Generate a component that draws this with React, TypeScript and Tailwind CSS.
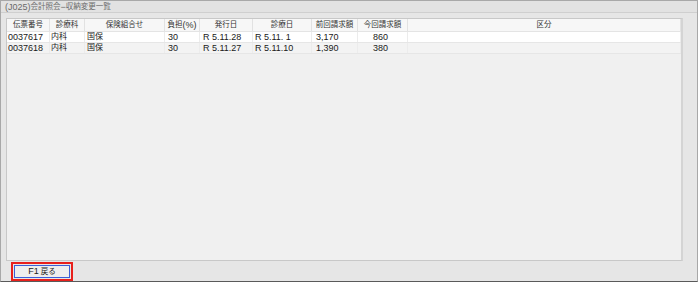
import React from "react";

const font = { fontFamily: '"Liberation Sans", "Noto Sans CJK JP", sans-serif' };

// column widths measured from the screen
const cols = [
  { key: "no", label: "伝票番号", w: "w-[43px]", pad: "pl-[1px]" },
  { key: "ka", label: "診療科", w: "w-[35px]", pad: "pl-[1px]" },
  { key: "hoken", label: "保険組合せ", w: "w-[80px]", pad: "pl-[2px]" },
  { key: "futan", label: "負担(%)", w: "w-[35px]", pad: "pl-[3px]" },
  { key: "hakko", label: "発行日", w: "w-[53px]", pad: "pl-[3px]" },
  { key: "shinryo", label: "診療日", w: "w-[59px]", pad: "pl-[2px]" },
  { key: "zenkai", label: "前回請求額", w: "w-[46px]", pad: "pl-[4px]" },
  { key: "konkai", label: "今回請求額", w: "w-[50px]", pad: "pl-[15px]" },
  { key: "kubun", label: "区分", w: "flex-1", pad: "pl-[2px]" },
];

const rows = [
  { no: "0037617", ka: "内科", hoken: "国保", futan: "30", hakko: "R 5.11.28", shinryo: "R 5.11. 1", zenkai: "3,170", konkai: "860", kubun: "" },
  { no: "0037618", ka: "内科", hoken: "国保", futan: "30", hakko: "R 5.11.27", shinryo: "R 5.11.10", zenkai: "1,390", konkai: "380", kubun: "" },
];

function J({ children }: { children: React.ReactNode }) {
  return <span className="text-[7.5px]">{children}</span>;
}

export default function App() {
  return (
    <div className="w-[700px] h-[282px] bg-white text-[9px] leading-none text-[#1a1a1a]" style={font}>
      <div className="w-[698px] h-[282px] border border-[#a8a8a8] border-b-[#5a5a5a] bg-[#e6e6e6] flex flex-col">
        {/* title */}
        <div className="h-[12px] bg-[#e2e2e2] border-b border-[#cfcfcf] flex items-center pl-[4px] pt-[1px] text-[#6a6a6a]">
          (J025)<J>会計照会</J>−<J>収納変更一覧</J>
        </div>

        <div className="flex-1 flex flex-col pl-[5px] pr-[14px] pt-[5px]">
          <div className="flex-1 border border-[#c8c8c8] border-r-[2px] border-r-[#d4d4d4] bg-[#f0f0f0] flex flex-col">
            <div className="h-[13px] flex bg-[#f7f7f7] border-b border-[#e4e4e4]">
              {cols.map((c) => (
                <div
                  key={c.key}
                  className={`${c.w} flex items-center justify-center border-r border-[#e2e2e2] text-[#333]`}
                >
                  {c.key === "futan" ? (
                    <>
                      <J>負担</J>(%)
                    </>
                  ) : (
                    <J>{c.label}</J>
                  )}
                </div>
              ))}
            </div>
            {rows.map((r, i) => (
              <div
                key={r.no}
                className={`h-[11px] flex border-b border-[#e6e6e6] ${i % 2 === 0 ? "bg-white" : "bg-[#f3f3f3]"}`}
              >
                {cols.map((c) => {
                  const v = r[c.key as keyof typeof r];
                  const cjk = /[^\x00-\x7f]/.test(v);
                  return (
                    <div key={c.key} className={`${c.w} ${c.pad} flex items-center border-r border-[#ececec]`}>
                      {cjk ? <span className="text-[8px]">{v}</span> : v}
                    </div>
                  );
                })}
              </div>
            ))}
          </div>

          <div className="h-[20px] pt-[1px]">
            <div className="ml-[5px] w-[62px] h-[19px] border-2 border-[#e8201c] p-[1px]">
              <button className="w-full h-full border border-[#3a5fd8] bg-[#eeeeee] flex items-center justify-center text-[#222]">
                F1 <J>&nbsp;戻る</J>
              </button>
            </div>
          </div>
        </div>
      </div>
    </div>
  );
}
